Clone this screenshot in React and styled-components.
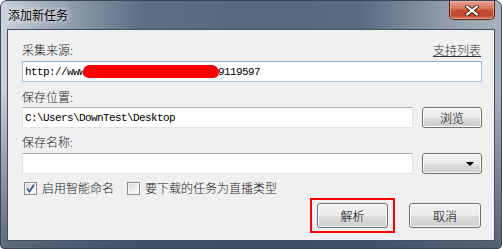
import React from 'react';
import styled, { createGlobalStyle } from 'styled-components';

const GlobalStyle = createGlobalStyle`
  html, body {
    margin: 0;
    padding: 0;
    background: #ffffff;
  }
  body {
    font-family: "Noto Sans CJK SC", "Liberation Sans", sans-serif;
    font-size: 12px;
    font-weight: 300;
    color: #1a1a1a;
  }
  * {
    box-sizing: border-box;
  }
`;

const StyledWindow = styled.div`
  width: 502px;
  height: 249px;
  display: flex;
  flex-direction: column;
  border: 1px solid #3b4656;
  border-radius: 7px 7px 4px 4px;
  overflow: hidden;
  background: linear-gradient(to bottom, rgba(60, 75, 95, 0) 0%, rgba(60, 75, 95, 0) 35%, rgba(55, 70, 90, 0.75) 100%),
    linear-gradient(to right, #ccd4dd 0%, #a3afbc 8%, #5d6f83 28%, #56687c 50%, #5a6b7f 72%, #8d9aa8 88%, #a9b3be 100%);
`;

const StyledTitleBar = styled.div`
  height: 28px;
  display: flex;
  justify-content: space-between;
  align-items: flex-start;
  flex-shrink: 0;
`;

const StyledTitle = styled.div`
  padding: 6px 0 0 7px;
  font-size: 12px;
  font-weight: 400;
  line-height: 16px;
  color: #000;
  text-shadow: 0 0 5px rgba(255, 255, 255, 0.95), 0 0 9px rgba(255, 255, 255, 0.8);
`;

const StyledClose = styled.div`
  width: 46px;
  height: 19px;
  margin-right: 6px;
  display: flex;
  align-items: center;
  justify-content: center;
  border: 1px solid #5a2418;
  border-top: none;
  border-radius: 0 0 5px 5px;
  background: linear-gradient(to bottom, #e6a08f 0%, #d8795f 40%, #c44a30 55%, #c24a30 80%, #d8785a 100%);
  box-shadow: inset 0 0 0 1px rgba(255, 200, 180, 0.5);
`;

const StyledContent = styled.div`
  flex: 1;
  margin: 0 6px 7px 6px;
  border: 1px solid #44505e;
  background: #f0f0f0;
  padding: 12px 12px 0 14px;
  display: flex;
  flex-direction: column;
`;

const StyledLabelRow = styled.div`
  height: 16px;
  line-height: 16px;
  margin-top: ${({ top }) => top || 0}px;
  display: flex;
  justify-content: space-between;
  align-items: center;
`;

const StyledLink = styled.span`
  color: #333;
  text-decoration: underline;
  margin-right: 1px;
`;

const StyledRow = styled.div`
  display: flex;
  align-items: center;
  gap: 9px;
  margin-top: ${({ top }) => top || 0}px;
`;

const StyledTextBox = styled.div`
  flex: 1;
  height: 21px;
  display: flex;
  align-items: center;
  padding: 0 2px;
  background: #ffffff;
  border: 1px solid ${({ focused }) => (focused ? '#a9c6e0' : '#e2e3ea')};
  border-top-color: ${({ focused }) => (focused ? '#8fb2d4' : '#abadb3')};
  font-family: "Liberation Mono", "DejaVu Sans Mono", monospace;
  font-size: 11px;
  font-weight: 400;
  letter-spacing: -0.6px;
  color: #000;
  white-space: nowrap;
  overflow: hidden;
`;

const StyledRedact = styled.span`
  display: inline-block;
  width: 136px;
  height: 13px;
  margin: 0 -1px 0 -2px;
  border-radius: 7px 8px 6px 6px;
  background: #ff0000;
`;

const StyledButton = styled.div`
  width: ${({ width }) => width || 60}px;
  height: ${({ height }) => height || 21}px;
  display: flex;
  align-items: center;
  justify-content: ${({ dropdown }) => (dropdown ? 'flex-end' : 'center')};
  padding: ${({ dropdown }) => (dropdown ? '0 7px 0 0' : '0')};
  border: 1px solid #707070;
  border-radius: 3px;
  background: linear-gradient(to bottom, #f2f2f2 0%, #ebebeb 50%, #dddddd 51%, #cfcfcf 100%);
  box-shadow: inset 0 0 0 1px #fbfbfb;
  color: #000;
  font-size: 12px;
  flex-shrink: 0;
`;

const StyledArrow = styled.span`
  width: 0;
  height: 0;
  border-left: 4px solid transparent;
  border-right: 4px solid transparent;
  border-top: 4px solid #000;
`;

const StyledCheckRow = styled.div`
  height: 16px;
  margin-top: 6px;
  display: flex;
  align-items: center;
  padding-left: 2px;
`;

const StyledCheckbox = styled.span`
  width: 13px;
  height: 13px;
  display: inline-flex;
  align-items: center;
  justify-content: center;
  border: 1px solid #8e8f8f;
  background: linear-gradient(135deg, #d8d8d8 0%, #f4f4f4 70%, #ffffff 100%);
  box-shadow: inset 0 0 0 1px #f6f6f6;
  margin-right: 5px;
  flex-shrink: 0;
`;

const StyledCheckLabel = styled.span`
  line-height: 16px;
  margin-right: ${({ gap }) => gap || 0}px;
`;

const StyledActions = styled.div`
  display: flex;
  justify-content: flex-end;
  align-items: center;
  gap: 14px;
  margin-top: 2px;
  margin-right: 1px;
`;

const StyledHighlight = styled.div`
  border: 2px solid #ff0000;
  padding: 3px 5px;
  display: flex;
`;

const CloseIcon = () => (
  <svg width="14" height="11" viewBox="0 0 14 11">
    <path d="M2 1.5 L12 9.5 M12 1.5 L2 9.5" stroke="#4a1d14" strokeWidth="4" strokeLinecap="round" />
    <path d="M2 1.5 L12 9.5 M12 1.5 L2 9.5" stroke="#ffffff" strokeWidth="2.2" strokeLinecap="round" />
  </svg>
);

const CheckMark = () => (
  <svg width="9" height="9" viewBox="0 0 9 9">
    <path d="M1 4.5 L3.5 7.5 L8 0.8" fill="none" stroke="#3d5496" strokeWidth="1.8" />
  </svg>
);

const App = () => (
  <>
    <GlobalStyle />
    <StyledWindow>
      <StyledTitleBar>
        <StyledTitle>添加新任务</StyledTitle>
        <StyledClose>
          <CloseIcon />
        </StyledClose>
      </StyledTitleBar>
      <StyledContent>
        <StyledLabelRow>
          <span>采集来源:</span>
          <StyledLink>支持列表</StyledLink>
        </StyledLabelRow>
        <StyledRow top={3}>
          <StyledTextBox focused>
            http://www
            <StyledRedact />
            9119597
          </StyledTextBox>
        </StyledRow>
        <StyledLabelRow top={7}>
          <span>保存位置:</span>
        </StyledLabelRow>
        <StyledRow top={2}>
          <StyledTextBox>C:\Users\DownTest\Desktop</StyledTextBox>
          <StyledButton>浏览</StyledButton>
        </StyledRow>
        <StyledLabelRow top={6}>
          <span>保存名称:</span>
        </StyledLabelRow>
        <StyledRow top={3}>
          <StyledTextBox />
          <StyledButton dropdown>
            <StyledArrow />
          </StyledButton>
        </StyledRow>
        <StyledCheckRow>
          <StyledCheckbox>
            <CheckMark />
          </StyledCheckbox>
          <StyledCheckLabel gap={13}>启用智能命名</StyledCheckLabel>
          <StyledCheckbox />
          <StyledCheckLabel>要下载的任务为直播类型</StyledCheckLabel>
        </StyledCheckRow>
        <StyledActions>
          <StyledHighlight>
            <StyledButton width={71} height={25}>解析</StyledButton>
          </StyledHighlight>
          <StyledButton width={72} height={25}>取消</StyledButton>
        </StyledActions>
      </StyledContent>
    </StyledWindow>
  </>
);

export default App;
